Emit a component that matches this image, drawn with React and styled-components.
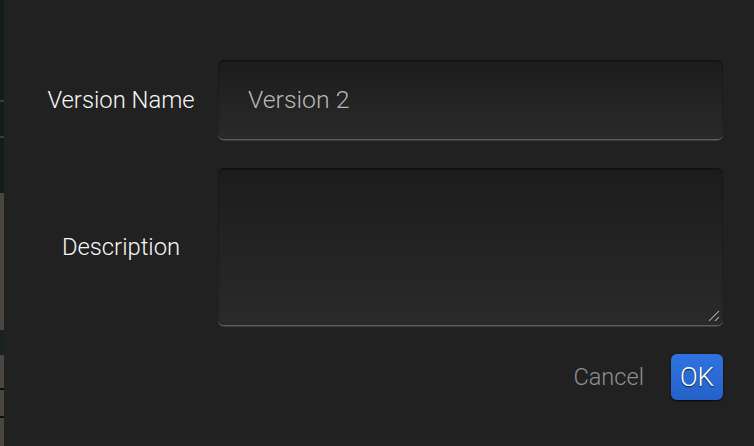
import React from "react";
import styled, { createGlobalStyle } from "styled-components";

const GlobalStyle = createGlobalStyle`
  html, body {
    margin: 0;
    padding: 0;
    background: #212121;
    overflow: hidden;
  }
  * { box-sizing: border-box; }
`;

const Page = styled.div`
  display: flex;
  width: 754px;
  height: 446px;
  background: #212121;
  font-family: Roboto, "Noto Sans", sans-serif;
`;

const Backdrop = styled.div`
  width: 4px;
  display: flex;
  flex-direction: column;
  flex-shrink: 0;
`;

const Segment = styled.div`
  height: ${(p) => p.$h}px;
  flex-shrink: 0;
  background: ${(p) => p.$c};
  ${(p) => (p.$grow ? "flex: 1;" : "")}
`;

const Dialog = styled.div`
  flex: 1;
  background: #212121;
  border-top-left-radius: 5px;
  padding: 60px 31px 0 20px;
  display: grid;
  grid-template-columns: 194px 1fr;
  grid-auto-rows: min-content;
  row-gap: 29px;
`;

const Label = styled.div`
  display: flex;
  align-items: center;
  justify-content: center;
  font-size: 23.8px;
  font-weight: 300;
  color: #f7f7f7;
`;

const Field = styled.div`
  position: relative;
  height: ${(p) => p.$h}px;
  border-radius: 6px;
  background: linear-gradient(#1c1c1c, #2a2a2a);
  box-shadow: inset 0 1px 2px rgba(0, 0, 0, 0.55), 0 1.5px 0 #5c5c5c;
  display: flex;
  align-items: center;
  padding-left: 30px;
  font-size: 24.8px;
  font-weight: 300;
  color: #b8b8b8;
`;

const Grip = styled.svg`
  position: absolute;
  right: 2px;
  bottom: 2px;
`;

const Actions = styled.div`
  grid-column: 2;
  display: flex;
  justify-content: flex-end;
  align-items: center;
  gap: 27px;
`;

const CancelButton = styled.button`
  background: none;
  border: none;
  padding: 0;
  font-family: Roboto, "Noto Sans", sans-serif;
  font-size: 23.6px;
  font-weight: 300;
  color: #8f8f8f;
`;

const OkButton = styled.button`
  width: 52px;
  height: 46px;
  border: none;
  border-radius: 6px;
  background: linear-gradient(#3073df, #2462c9);
  box-shadow: 0 1px 2px rgba(0, 0, 0, 0.8);
  font-family: Roboto, "Noto Sans", sans-serif;
  font-size: 26px;
  font-weight: 300;
  color: #ffffff;
  text-shadow: 0 1px 1px #0b1d3f;
  padding: 0;
`;

export default function App() {
  return (
    <>
      <GlobalStyle />
      <Page>
        <Backdrop>
          <Segment $h={100} $c="#141b1d" />
          <Segment $h={2} $c="#383e40" />
          <Segment $h={34} $c="#141b1d" />
          <Segment $h={2} $c="#383e40" />
          <Segment $h={55} $c="#141b1d" />
          <Segment $h={137} $c="#4c4641" />
          <Segment $h={25} $c="#1a2123" />
          <Segment $h={33} $c="#4c4641" />
          <Segment $h={2} $c="#0d0d0d" />
          <Segment $h={26} $c="#4c4641" />
          <Segment $h={2} $c="#0d0d0d" />
          <Segment $grow $c="#4c4641" />
        </Backdrop>
        <Dialog>
          <Label>Version Name</Label>
          <Field $h={79}>Version 2</Field>
          <Label>Description</Label>
          <Field $h={157}>
            <Grip width="14" height="14" viewBox="0 0 14 14">
              <line x1="2" y1="12" x2="12" y2="2" stroke="#111" strokeWidth="2.5" />
              <line x1="2" y1="12" x2="12" y2="2" stroke="#9a9a9a" strokeWidth="1.5" />
              <line x1="8" y1="12" x2="12" y2="8" stroke="#111" strokeWidth="2.5" />
              <line x1="8" y1="12" x2="12" y2="8" stroke="#9a9a9a" strokeWidth="1.5" />
            </Grip>
          </Field>
          <div />
          <Actions>
            <CancelButton>Cancel</CancelButton>
            <OkButton>OK</OkButton>
          </Actions>
        </Dialog>
      </Page>
    </>
  );
}
